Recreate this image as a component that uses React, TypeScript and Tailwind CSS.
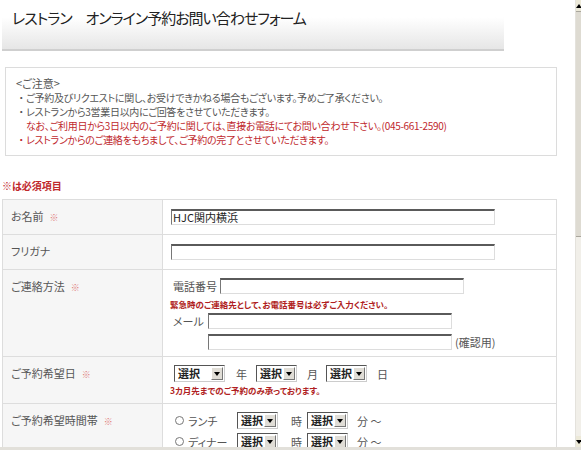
import React from 'react'

const jp = "font-['Noto_Sans_CJK_JP','Liberation_Sans',sans-serif] [font-feature-settings:'palt']"

function Req() {
  return <span className="ml-[6px] text-[9px] text-[#df7a7a]">※</span>
}

function TextBox({ w, value }: { w: string; value?: string }) {
  return (
    <div
      className={`${w} h-[16px] shrink-0 bg-white border border-t-2 border-t-[#5a5a5a] border-l-[#777] border-r-[#ddd] border-b-[#ddd] text-[11px] leading-[13px] pl-[1px] text-[#222]`}
    >
      {value}
    </div>
  )
}

function Select({ w }: { w: string }) {
  return (
    <div
      className={`${w} h-[17px] shrink-0 flex bg-white border border-t-[#555] border-l-[#555] border-r-[#ccc] border-b-[#ccc]`}
    >
      <span className="flex-1 pl-[3px] text-[11px] leading-[15px] font-bold text-[#222]">選択</span>
      <span className="w-[12px] my-[1px] mr-[1px] bg-[#e0ddd6] border border-t-white border-l-white border-r-[#777] border-b-[#777] flex items-center justify-center">
        <span className="block w-0 h-0 border-l-[3px] border-r-[3px] border-t-[4px] border-l-transparent border-r-transparent border-t-black" />
      </span>
    </div>
  )
}

function Radio() {
  return <span className="inline-block shrink-0 w-[9px] h-[9px] rounded-full border border-[#777] bg-white" />
}

function Bullet({ red, children }: { red?: boolean; children: React.ReactNode }) {
  return (
    <div className={`flex h-[14px] ${red ? 'text-[#c0282d]' : ''}`}>
      <span className="w-[10px] shrink-0 text-center">・</span>
      <span>{children}</span>
    </div>
  )
}

function Row({ label, req, h, children }: { label: string; req?: boolean; h: string; children?: React.ReactNode }) {
  return (
    <div className={`flex ${h} border-b border-[#ddd]`}>
      <div className="w-[160px] shrink-0 bg-[#f6f6f6] border-r border-[#ddd] pl-[8px] pt-[9px] text-[11px] leading-[14px] text-[#555]">
        {label}
        {req && <Req />}
      </div>
      <div className="flex-1 bg-white pl-[8px] whitespace-nowrap">{children}</div>
    </div>
  )
}

function TimeLine({ label }: { label: string }) {
  return (
    <div className="flex items-center">
      <Radio />
      <span className="ml-[4px] w-[49px]">{label}</span>
      <Select w="w-[41px]" />
      <span className="ml-[13px] mr-[5px] w-[11px]">時</span>
      <Select w="w-[41px]" />
      <span className="ml-[9px]">分 ～</span>
    </div>
  )
}

export default function App() {
  return (
    <div className={`w-[581px] h-[450px] overflow-hidden flex flex-col bg-white ${jp}`}>
      <div className="flex flex-1 min-h-0">
        <div className="w-[575px] overflow-hidden">
          {/* Header */}
          <div className="w-[502px] ml-[2px] h-[51px] bg-gradient-to-b from-white from-[35%] to-[#e6e6e6] border-b-2 border-[#cfcfcf]">
            <h1 className="pl-[10px] pt-[9px] text-[15px] leading-[18px] tracking-[-1px] text-[#222]">
              レストラン　オンライン予約お問い合わせフォーム
            </h1>
          </div>

          {/* Notice */}
          <div className="mt-[16px] ml-[5px] w-[552px] border border-[#dcdcdc] px-[10px] pt-[7px] pb-[8px] text-[10px] leading-[14px] tracking-[-0.3px] text-[#555]">
            <div className="h-[16px] text-[11px] leading-[16px] tracking-normal">&lt;ご注意&gt;</div>
            <Bullet>ご予約及びリクエストに関し、お受けできかねる場合もございます。予めご了承ください。</Bullet>
            <Bullet>レストランから3営業日以内にご回答をさせていただきます。</Bullet>
            <div className="h-[14px] pl-[10px] text-[#c0282d]">
              なお、ご利用日から3日以内のご予約に関しては、直接お電話にてお問い合わせ下さい。(045-661-2590)
            </div>
            <Bullet red>レストランからのご連絡をもちまして、ご予約の完了とさせていただきます。</Bullet>
          </div>

          <div className="mt-[23px] ml-[2px] text-[10px] leading-[14px] font-bold text-[#c0282d]">※は必須項目</div>

          {/* Table */}
          <div className="mt-[6px] ml-[2px] w-[555px] border-t border-x border-[#ddd]">
            <Row label="お名前" req h="h-[35px]">
              <div className="pt-[9px]">
                <TextBox w="w-[324px]" value="HJC関内横浜" />
              </div>
            </Row>
            <Row label="フリガナ" h="h-[35px]">
              <div className="pt-[9px]">
                <TextBox w="w-[324px]" />
              </div>
            </Row>
            <Row label="ご連絡方法" req h="h-[87px]">
              <div className="pt-[8px] pl-[2px] text-[11px] leading-[14px] text-[#555]">
                <div className="flex items-center">
                  <span className="w-[47px]">電話番号</span>
                  <TextBox w="w-[244px]" />
                </div>
                <div className="-ml-[3px] mt-[4px] text-[8.5px] leading-[12px] font-bold text-[#b01e22]">
                  緊急時のご連絡先として、お電話番号は必ずご入力ください。
                </div>
                <div className="flex items-center mt-[3px]">
                  <span className="w-[35px]">メール</span>
                  <TextBox w="w-[244px]" />
                </div>
                <div className="flex items-center gap-[3px] mt-[5px] pl-[35px]">
                  <TextBox w="w-[244px]" />
                  <span>(確認用)</span>
                </div>
              </div>
            </Row>
            <Row label="ご予約希望日" req h="h-[47px]">
              <div className="pt-[8px] pl-[3px] text-[11px] leading-[14px] text-[#555]">
                <div className="flex items-center">
                  <Select w="w-[51px]" />
                  <span className="ml-[11px] mr-[9px] w-[11px]">年</span>
                  <Select w="w-[41px]" />
                  <span className="ml-[10px] mr-[8px] w-[11px]">月</span>
                  <Select w="w-[41px]" />
                  <span className="ml-[10px]">日</span>
                </div>
                <div className="-ml-[4px] mt-[2px] text-[8.5px] leading-[12px] font-bold text-[#b01e22]">
                  3カ月先までのご予約のみ承っております。
                </div>
              </div>
            </Row>
            <Row label="ご予約希望時間帯" req h="h-[60px]">
              <div className="pt-[8px] pl-[4px] text-[11px] leading-[14px] text-[#555] flex flex-col gap-[4px]">
                <TimeLine label="ランチ" />
                <TimeLine label="ディナー" />
              </div>
            </Row>
          </div>
        </div>

        {/* Scrollbar */}
        <div className="w-[6px] flex flex-col bg-[#f1efe9] border-l border-[#e4e2dc]">
          <div className="h-[11px] bg-[#ece9d8] flex items-center justify-center">
            <span className="block w-0 h-0 border-l-[3px] border-r-[3px] border-b-[4px] border-l-transparent border-r-transparent border-b-black" />
          </div>
          <div className="h-[226px] bg-[#dedbd2] border-y border-[#a9a69d]" />
          <div className="flex-1" />
          <div className="h-[11px] bg-[#ece9d8] flex items-center justify-center">
            <span className="block w-0 h-0 border-l-[3px] border-r-[3px] border-t-[4px] border-l-transparent border-r-transparent border-t-black" />
          </div>
        </div>
      </div>
      <div className="h-[3px] bg-[#e2e0da]" />
    </div>
  )
}
